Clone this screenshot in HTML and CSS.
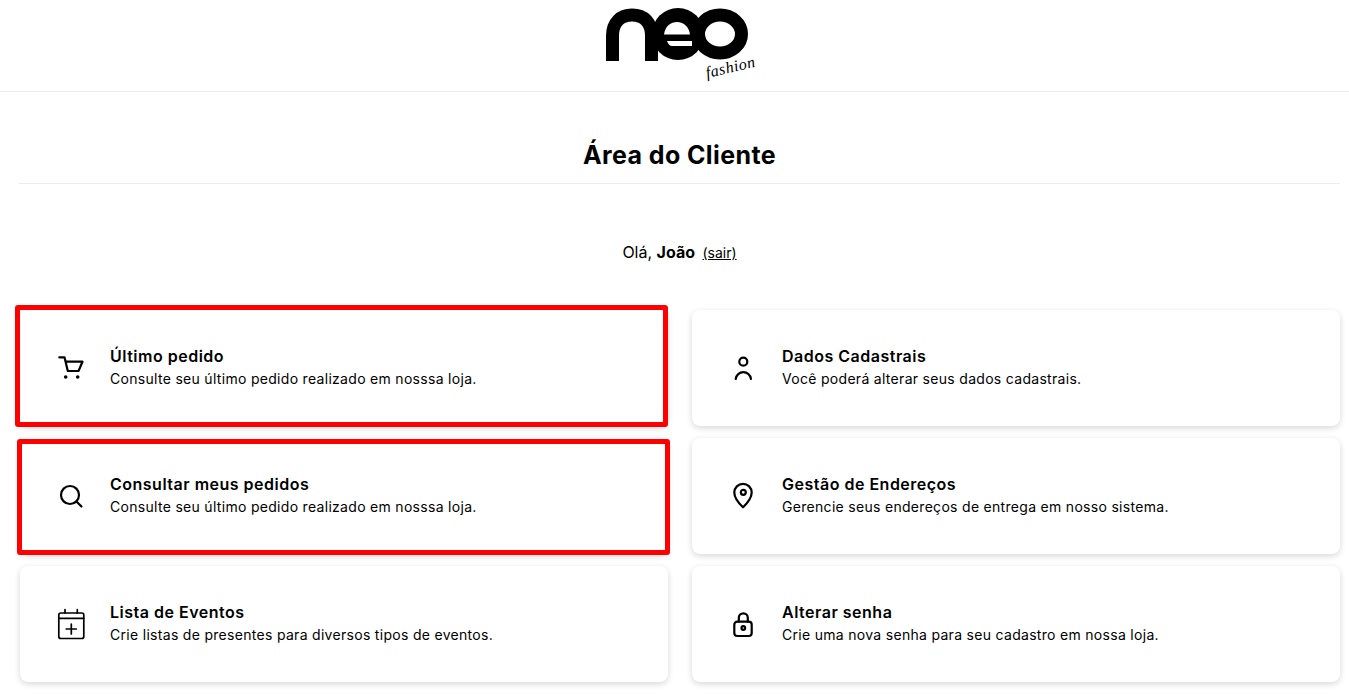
FILE: index.html
```html
<!DOCTYPE html>
<html lang="pt-BR">
<head>
<meta charset="utf-8">
<title>Área do Cliente</title>
<link rel="stylesheet" href="styles.css">
</head>
<body>
<header class="site-header">
  <svg class="logo" width="160" height="84" viewBox="600 0 160 84" aria-label="neo fashion">
    <ellipse class="logo-fill" cx="678" cy="34" rx="26" ry="26"/>
    <path class="logo-cut" d="M664 34.500C665 26 671 22 677 22C684 22 689 27 690 34.500Z"/>
    <path class="logo-cut" d="M667 41H692V46H672C670 46 668 44 667 41Z"/>
    <path class="logo-n" d="M612.500 61V36C612.500 22 621 15 632 15C644 15 651.500 22 651.500 36V61"/>
    <ellipse class="logo-ring" cx="720" cy="34" rx="21.500" ry="19"/>
    <text class="logo-sub" x="707" y="78" transform="rotate(-13 707 78)">fashion</text>
  </svg>
</header>
<main class="wrap">
  <h1 class="page-title">Área do Cliente</h1>
  <p class="greeting">Olá, <strong>João</strong> <a class="logout" href="#">(sair)</a></p>
  <section class="grid">
    <a class="card" href="#">
      <span class="mark mark-a"></span>
      <svg class="icon" viewBox="0 0 28 28"><path d="M2.300 3.300H7.500L10.800 17H21.500L25.500 7.700H8.500"/><circle class="dot" cx="8.700" cy="23" r="1.800"/><circle class="dot" cx="20.700" cy="23" r="1.800"/></svg>
      <span class="card-text"><strong class="card-title">Último pedido</strong><span class="card-desc">Consulte seu último pedido realizado em nosssa loja.</span></span>
    </a>
    <a class="card" href="#">
      <svg class="icon" viewBox="0 0 28 28"><circle cx="14.300" cy="7.700" r="4"/><path d="M6.700 25A7.700 7.700 0 0 1 22 25"/></svg>
      <span class="card-text"><strong class="card-title">Dados Cadastrais</strong><span class="card-desc">Você poderá alterar seus dados cadastrais.</span></span>
    </a>
    <a class="card" href="#">
      <span class="mark mark-b"></span>
      <svg class="icon" viewBox="0 0 28 28"><circle cx="13" cy="13" r="9"/><path d="M19.500 19.500L24.500 24.500"/></svg>
      <span class="card-text"><strong class="card-title">Consultar meus pedidos</strong><span class="card-desc">Consulte seu último pedido realizado em nosssa loja.</span></span>
    </a>
    <a class="card" href="#">
      <svg class="icon" viewBox="0 0 28 28"><path d="M14 25.300C9 20.500 5.300 16 5.300 10.500A8.700 8.700 0 0 1 22.700 10.500C22.700 16 19 20.500 14 25.300Z"/><circle cx="14.300" cy="10.300" r="2.500"/></svg>
      <span class="card-text"><strong class="card-title">Gestão de Endereços</strong><span class="card-desc">Gerencie seus endereços de entrega em nosso sistema.</span></span>
    </a>
    <a class="card" href="#">
      <svg class="icon icon-thin" viewBox="0 0 28 28"><rect x="1.800" y="3" width="25" height="25.500" rx="2"/><path d="M1.800 8.300H26.800M8 -.5V3M20.300 -.5V3M14.300 14V24M9.300 19H19.300"/></svg>
      <span class="card-text"><strong class="card-title">Lista de Eventos</strong><span class="card-desc">Crie listas de presentes para diversos tipos de eventos.</span></span>
    </a>
    <a class="card" href="#">
      <svg class="icon" viewBox="0 0 28 28"><rect x="5.300" y="11.700" width="17.400" height="14.300" rx="3"/><path d="M9.800 11.700V7.800A4.500 4.500 0 0 1 18.800 7.800V11.700"/><circle cx="14.300" cy="18" r="1.800"/></svg>
      <span class="card-text"><strong class="card-title">Alterar senha</strong><span class="card-desc">Crie uma nova senha para seu cadastro em nossa loja.</span></span>
    </a>
  </section>
</main>
</body>
</html>
```
FILE: styles.css
```css
* { box-sizing: border-box; }
html, body { margin: 0; padding: 0; }
body {
  background: #fff;
  color: #000;
  font-family: Inter, "Liberation Sans", sans-serif;
}
.site-header {
  height: 92px;
  border-bottom: 1px solid #ececec;
  display: flex;
  justify-content: center;
}
.logo { display: block; margin-left: 11px; overflow: visible; }
.logo-fill { fill: #000; }
.logo-cut { fill: #fff; }
.logo-n, .logo-ring { fill: none; stroke: #000; stroke-width: 13; }
.logo-sub { font-family: "Liberation Serif", serif; font-style: italic; font-size: 16px; letter-spacing: .5px; fill: #000; }
.wrap { margin: 0 9px 0 19px; }
.page-title {
  margin: 0;
  height: 92px;
  padding-top: 46px;
  border-bottom: 1px solid #ececec;
  text-align: center;
  font-size: 25px;
  line-height: 34px;
  font-weight: 700;
  letter-spacing: .4px;
}
.greeting {
  margin: 0;
  padding-top: 58px;
  height: 126px;
  text-align: center;
  font-size: 16px;
  line-height: 20px;
}
.logout { color: #000; font-size: 14px; margin-left: 3px; }
.grid {
  display: grid;
  grid-template-columns: 648px 648px;
  grid-auto-rows: 116px;
  gap: 12px 24px;
  padding: 0 0 12px 1px;
}
.card {
  position: relative;
  display: flex;
  align-items: center;
  padding-left: 37px;
  background: #fff;
  border-radius: 8px;
  box-shadow: 0 2px 6px rgba(0, 0, 0, .16);
  color: #000;
  text-decoration: none;
}
.mark { position: absolute; border: 5px solid #f00; border-radius: 3px; }
.mark-a { left: -5px; top: -5px; width: 653px; height: 122px; }
.mark-b { left: -3px; top: 1px; width: 653px; height: 116px; }
.icon {
  width: 28px;
  height: 28px;
  margin-right: 25px;
  flex: none;
  overflow: visible;
  fill: none;
  stroke: #000;
  stroke-width: 2.200;
  stroke-linejoin: round;
  stroke-linecap: round;
}
.icon-thin { stroke-width: 1.700; }
.dot { fill: #000; stroke: none; }
.card-text { display: flex; flex-direction: column; padding-bottom: 2px; }
.card-title { font-size: 16px; line-height: 22px; font-weight: 600; letter-spacing: .5px; }
.card-desc { font-size: 14px; line-height: 23px; letter-spacing: .3px; }
```
